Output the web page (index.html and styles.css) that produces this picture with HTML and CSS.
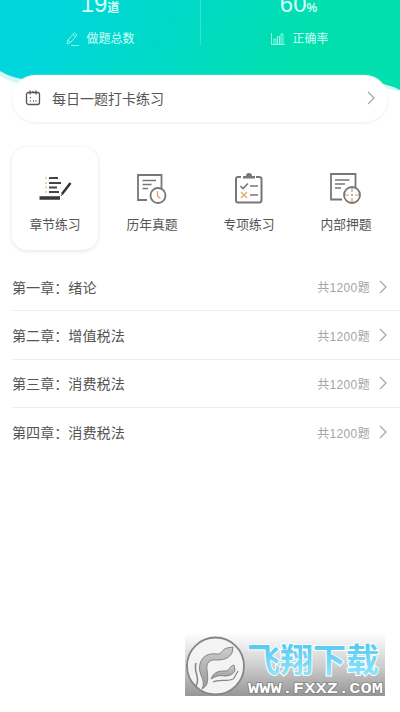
FILE: index.html
```html
<!DOCTYPE html>
<html lang="zh-CN">
<head>
<meta charset="utf-8">
<meta name="viewport" content="width=device-width">
<title>练习</title>
<link rel="stylesheet" href="styles.css">
</head>
<body>
<header class="hero">
  <svg class="hero-bg" viewBox="0 0 400 100" aria-hidden="true">
    <defs><linearGradient id="sea" gradientUnits="userSpaceOnUse" x1="60" y1="0" x2="265" y2="115"><stop offset="0" stop-color="#00d6dc"/><stop offset=".5" stop-color="#00d9c5"/><stop offset="1" stop-color="#00dfad"/></linearGradient></defs>
    <path d="M0 76Q10 82 24 85H376L400 92V0H0Z" fill="#d5f8f7"/>
    <path d="M0 71Q10 77 22 79L50 82H365Q384 82 400 90V0H0Z" fill="url(#sea)"/>
  </svg>
  <div class="stat">
    <div class="value">19<small>道</small></div>
    <div class="caption"><svg width="15" height="16" viewBox="0 0 15 16"><path d="M2 13l1-4L9.500 1.800 12 4 5.500 11.600 2 13M3 9l2.500 2.400M8 3.500l2.500 2.200M6 14.500h8"/></svg>做题总数</div>
  </div>
  <div class="stat right">
    <div class="value">60<small>%</small></div>
    <div class="caption"><svg width="16" height="16" viewBox="0 0 16 16"><path d="M1.500 2v11.500H15M4 13V8h2v5M7.500 13V5.500h2V13M11 13V3h2v10"/></svg>正确率</div>
  </div>
</header>
<main>
  <a class="daily">
    <svg class="calendar" width="16" height="16" viewBox="0 0 16 16"><rect x="1.500" y="2.500" width="13" height="12" rx="2"/><path d="M5 .5v4M8 1v2M11 .5v4M5.500 7v1M5.500 10.500v1M8 11h1M10.500 11h1"/></svg>
    <span>每日一题打卡练习</span>
    <svg class="arrow" width="8" height="14" viewBox="0 0 8 14"><path d="M1 1l6 6-6 6"/></svg>
  </a>
  <nav class="tabs">
    <a class="tab active">
      <svg width="36" height="36" viewBox="0 0 36 36"><path d="M12 8h9M12 13h12M12 17.500h8M12 22h10" stroke="#444" stroke-width="2"/><path d="M8 8h2M8 13h2M8 17.500h2M8 22h2" stroke="#d8cba8" stroke-width="1.500"/><path d="M2.500 28H23" stroke="#333a36" stroke-width="3.500"/><path d="M25 24l8.500-11" stroke="#333" stroke-width="2.500"/><path d="M24 26l1.500-2" stroke="#333"/></svg>
      <span>章节练习</span>
    </a>
    <a class="tab">
      <svg width="36" height="36" viewBox="0 0 36 36"><path d="M13 30H4V5H27.500v14" stroke="#777" stroke-width="1.800"/><path d="M8.500 10.500H22M8.500 14.500h9M8.500 18.500H14" stroke="#777" stroke-width="1.600"/><circle cx="24" cy="25.500" r="7.500" fill="#fff" stroke="#777" stroke-width="1.800"/><path d="M23.500 21v5l3 2.500" stroke="#df9b83" stroke-width="1.300"/></svg>
      <span>历年真题</span>
    </a>
    <a class="tab">
      <svg width="36" height="36" viewBox="0 0 36 36"><path d="M10 7H7Q5 7 5 9v21q0 2.500 2 2.500h21q2.500 0 2.500-2.500V9q0-2-2.500-2h-3" stroke="#777" stroke-width="2"/><path d="M12 8.500V6h3q0-3 3-3t3 3h3v2.500Z" fill="#777"/><path d="M9.500 16l2.500 2.500 5-5M19 16h8M19 25h8" stroke="#777" stroke-width="1.600"/><path d="M10 22l6 6M16 22l-6 6" stroke="#e2a56d" stroke-width="1.300"/></svg>
      <span>专项练习</span>
    </a>
    <a class="tab">
      <svg width="36" height="36" viewBox="0 0 36 36"><path d="M14 29.500H3V4h24.500v14" stroke="#777" stroke-width="1.800"/><path d="M7 10h14.500M7 14h10M7 18h6" stroke="#777" stroke-width="1.600"/><circle cx="24" cy="25" r="8" fill="#fff" stroke="#777" stroke-width="1.800"/><path d="M24 18v4M24 28v4M17 25h4M27 25h4" stroke="#cf9875" stroke-width="1.200"/><circle cx="24" cy="25" r="1" fill="#b78263"/></svg>
      <span>内部押题</span>
    </a>
  </nav>
  <ul class="chapters">
    <li><span>第一章：绪论</span><em>共<b>1200</b>题</em><svg class="arrow" width="8" height="14" viewBox="0 0 8 14"><path d="M1 1l6 6-6 6"/></svg></li>
    <li><span>第二章：增值税法</span><em>共<b>1200</b>题</em><svg class="arrow" width="8" height="14" viewBox="0 0 8 14"><path d="M1 1l6 6-6 6"/></svg></li>
    <li><span>第三章：消费税法</span><em>共<b>1200</b>题</em><svg class="arrow" width="8" height="14" viewBox="0 0 8 14"><path d="M1 1l6 6-6 6"/></svg></li>
    <li><span>第四章：消费税法</span><em>共<b>1200</b>题</em><svg class="arrow" width="8" height="14" viewBox="0 0 8 14"><path d="M1 1l6 6-6 6"/></svg></li>
  </ul>
</main>
<svg class="watermark" width="200" height="64" viewBox="0 0 200 64">
  <defs>
    <linearGradient id="plate" x2="0" y2="1"><stop offset="0" stop-color="#fff"/><stop offset=".5" stop-color="#d0d0d0"/><stop offset="1" stop-color="#969696"/></linearGradient>
    <linearGradient id="sky" x2="0" y2="1"><stop offset=".2" stop-color="#55c9f0"/><stop offset="1" stop-color="#9ce9fb"/></linearGradient>
    <linearGradient id="wing" x2="0" y2="1"><stop offset="0" stop-color="#ccc"/><stop offset="1" stop-color="#999"/></linearGradient>
  </defs>
  <path fill="url(#plate)" d="M0 0h200v63H0z"/>
  <circle cx="30.500" cy="33" r="28.500" fill="#f3f3f3" stroke="#858585" stroke-width="1.800"/>
  <path d="M17 56C22 47 12 41 15 31c2-8 9-11 16-10 6 1 6-5 11-6l6-1-1 6c-3 5-8 7-14 7-9-1-12 3-11 10 1 9 2 15-5 19Z" fill="url(#wing)" stroke="#858585"/>
  <path d="M11 30c-3 9 5 15 0 23" fill="none" stroke="#858585" stroke-width="1.500"/>
  <path d="M26 46c3-8 9-8 14-8 5 0 4-5 9-6l1 5c-1 4-5 6-10 6-6-1-9 0-14 3Z" fill="url(#wing)" stroke="#858585"/>
  <path d="M28 49c7-4 17 1 21-4l4-7" fill="none" stroke="#858585" stroke-width="1.200"/>
  <text class="brand" x="62" y="39" textLength="132">飞翔下载</text>
  <text class="site" x="63" y="59.500" textLength="135" lengthAdjust="spacingAndGlyphs">WWW.FXXZ.COM</text>
</svg>
</body>
</html>
```
FILE: styles.css
```css
* { box-sizing: border-box; }
body {
  margin: 0;
  width: 400px;
  height: 712px;
  overflow: hidden;
  position: relative;
  background: #fff;
  color: #555;
  font-family: "Liberation Sans", "Noto Sans CJK SC", sans-serif;
}
svg { flex: none; fill: none; }
.hero {
  position: relative;
  display: grid;
  grid-template-columns: 1fr 1fr;
  height: 75px;
  color: #d0fff8;
}
.hero-bg { position: absolute; top: 0; left: 0; width: 400px; height: 100px; }
.stat { position: relative; height: 45px; text-align: center; }
.stat.right { border-left: 1px solid #35e2d0; }
.value { height: 18px; margin-top: -9px; font-size: 24px; line-height: 26px; white-space: nowrap; }
.value small { font-size: 12px; font-weight: 700; }
.right .value { padding-right: 4px; }
.caption { display: flex; align-items: center; justify-content: center; gap: 6px; height: 18px; margin-top: 21px; font-size: 12px; line-height: 18px; }
.right .caption { padding-right: 2px; }
.caption svg { stroke: #a0faea; stroke-width: .9; }
main { position: relative; }
.daily {
  display: flex;
  align-items: center;
  height: 47px;
  margin: 0 12px;
  padding: 0 13px 1px;
  border-radius: 24px;
  background: #fff;
  box-shadow: 0 1px 3px #e4edf5;
  font-size: 14px;
}
.daily span { margin-top: -1px; }
.calendar { margin-right: 11px; stroke: #555; stroke-width: 1.3; }
.arrow { margin-left: auto; stroke: #a5a5a5; stroke-width: 1.2; }
.tabs { display: grid; grid-template-columns: repeat(4, 86px); gap: 11px; margin: 25px 0 0 12px; }
.tab {
  display: flex;
  flex-direction: column;
  align-items: center;
  height: 103px;
  padding-top: 23px;
  border-radius: 15px;
  font-size: 12.8px;
  line-height: 20px;
}
.tab span { margin-top: 9px; }
.active { box-shadow: 0 1px 4px #d5e5ef; }
.chapters { list-style: none; margin: 13px 0 0; padding: 0 0 0 12px; }
.chapters li { display: flex; align-items: center; height: 48.4px; padding-right: 13px; border-bottom: 1px solid #eee; font-size: 14.1px; }
.chapters li:last-child { border: 0; }
.chapters em { margin-left: auto; font-size: 12px; letter-spacing: .35px; font-style: normal; color: #a5a5a5; }
.chapters b { font-weight: 400; }
.chapters .arrow { margin-left: 9px; }
.watermark { position: absolute; left: 185px; top: 633px; }
.brand { font: 700 33px "Noto Sans CJK SC", sans-serif; fill: url(#sky); stroke: #fff; stroke-width: 2px; paint-order: stroke; }
.site { font: 700 14px "Liberation Mono", monospace; fill: #fff; stroke: #777; stroke-width: 1.2px; paint-order: stroke; }
```
